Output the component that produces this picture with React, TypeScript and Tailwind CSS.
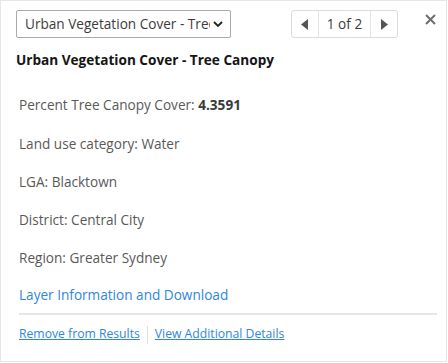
import React from "react";

const rows = [
  { label: "Land use category", value: "Water" },
  { label: "LGA", value: "Blacktown" },
  { label: "District", value: "Central City" },
  { label: "Region", value: "Greater Sydney" },
];

export default function App() {
  return (
    <div className="h-[363px] w-[448px] bg-white font-['Open_Sans',sans-serif]">
      <div className="flex h-[362px] w-[447px] flex-col border border-[#e6e6e6] bg-white">
        <div className="flex items-center pl-[15px] pt-[9px]">
          <div className="flex h-[28px] w-[215px] shrink-0 items-center overflow-hidden rounded-[2px] border border-[#a9a9a9] pl-[8px] pr-[6px]">
            <span className="flex-1 overflow-hidden whitespace-nowrap text-[13.6px] text-[#3c3c3c]">
              Urban Vegetation Cover - Tree Canopy
            </span>
            <svg width="12" height="12" viewBox="0 0 12 12" className="ml-[2px] shrink-0">
              <path d="M2 4 L6 8 L10 4" fill="none" stroke="#222" strokeWidth="1.8" />
            </svg>
          </div>
          <div className="ml-[60px] flex h-[28px] shrink-0 items-stretch rounded-[3px] border border-[#dcdcdc] text-[13.6px] text-[#3c3c3c]">
            <button className="flex w-[27px] items-center justify-center border-r border-[#e4e4e4]">
              <svg width="8" height="11" viewBox="0 0 8 11">
                <path d="M7 0 L0 5.5 L7 11 Z" fill="#555" />
              </svg>
            </button>
            <span className="flex w-[51px] items-center justify-center">1 of 2</span>
            <button className="flex w-[27px] items-center justify-center border-l border-[#e4e4e4]">
              <svg width="8" height="11" viewBox="0 0 8 11">
                <path d="M1 0 L8 5.5 L1 11 Z" fill="#555" />
              </svg>
            </button>
          </div>
          <button className="ml-[27px] flex h-[16px] w-[11px] shrink-0 items-center justify-center self-start pt-[3px]">
            <svg width="11" height="11" viewBox="0 0 11 11">
              <path d="M1 1 L10 10 M10 1 L1 10" stroke="#6e6e6e" strokeWidth="2" />
            </svg>
          </button>
        </div>
        <h2 className="px-[15px] pt-[12px] text-[13.6px] font-bold text-[#151515]">
          Urban Vegetation Cover - Tree Canopy
        </h2>
        <div className="flex flex-col px-[18px] pt-[25px] text-[13.6px] text-[#595959]">
          <p className="leading-[20px]">
            Percent Tree Canopy Cover: <b className="text-[#3a3a3a]">4.3591</b>
          </p>
          {rows.map((r) => (
            <p key={r.label} className="mt-[18.25px] leading-[20px]">
              {r.label}: {r.value}
            </p>
          ))}
          <a className="mt-[17px] leading-[20px] text-[#2e86de]" href="#">
            Layer Information and Download
          </a>
        </div>
        <div className="ml-[18px] mr-[9px] mt-[8px] h-[2px] bg-[#e6e6e6]" />
        <div className="flex items-center px-[18px] pt-[10px] text-[12.2px] text-[#2e86de]">
          <a href="#" className="underline">Remove from Results</a>
          <span className="mx-[7px] h-[18px] w-px bg-[#e0e0e0]" />
          <a href="#" className="underline">View Additional Details</a>
        </div>
      </div>
    </div>
  );
}
